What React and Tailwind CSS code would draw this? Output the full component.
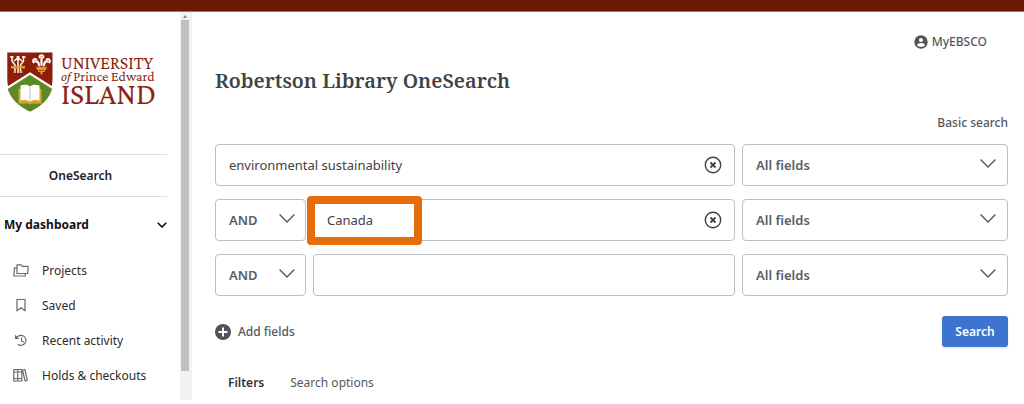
import React from "react";

function Chevron({ className }) {
  return (
    <svg viewBox="0 0 16 9" fill="none" stroke="currentColor" strokeWidth="1.4" className={className} aria-hidden="true">
      <path d="M.6.6 8 8 15.4.6" />
    </svg>
  );
}

function Crest() {
  return (
    <svg viewBox="0 0 46 60" className="h-[60px] w-[46px] shrink-0" role="img" aria-label="University crest">
      <path d="M.3.5h45.2v26c0 17-9 26-22.500 33C9.500 52.500.3 43.500.3 26.500z" fill="#8b1f0a" />
      <path d="M23 22.500 45.500 35.500C43 46 35 54 23 59.500 11 54 3 46 .3 35.500z" fill="#5b8a24" />
      <path d="M0 36 23 21.500 46 36" fill="none" stroke="#fff" strokeWidth="2.200" />
      <g fill="none" stroke="#fff" strokeWidth="1.500">
        <path d="M3 5h3.500M9.500 5h3M15 5h3.500M5 4v5l3 4v8M11 4v17M16.500 4v5l-3 4v8M7 9l4-3 4 3" />
      </g>
      <path d="M4 14h14v2.500H4zM6.500 19h2v2h-2zM13.500 19h2v2h-2z" fill="#e29a35" />
      <g fill="none" stroke="#fff" strokeLinecap="round">
        <path d="M34.500 13V5.500M32 13c-.5-3.500-2-4-4-3.500M37 13c.5-3.500 2-4 4-3.500" strokeWidth="2.200" />
        <path d="M32.500 5.500c0-3 4-3 4 0M26.500 10.500c-1.500-2 .5-4.500 3-3M42.500 10.500c1.500-2-.5-4.500-3-3" strokeWidth="1.800" />
      </g>
      <path d="m29 14 2 1.500 1.500-2 2 2 2-2 1.500 2 2-1.500-1 4H30zM31 18.500h7V20h-7zM33.500 20h2v2.500h-2z" fill="#e29a35" />
      <path d="M11.500 37h23v14.500h-9.500l-2 1-2-1h-9.500z" fill="#d9a62c" />
      <path d="M13.500 33.500c4-1.500 7.500-1 9.500 1 2-2 5.500-2.500 9.500-1v15c-4-1-7.500-.5-9.500 1-2-1.500-5.500-2-9.500-1z" fill="#fff" />
      <path d="M23 34.500v14" fill="none" stroke="#a8b890" strokeWidth=".8" />
    </svg>
  );
}

function Logo() {
  return (
    <a href="#home" className="flex items-start pl-[7px]">
      <Crest />
      <span className="flex flex-col pl-2 pt-1 font-['Crimson_Pro','Liberation_Serif',serif] text-[#8b2412]">
        <span className="text-[18px] leading-[14px]">UNIVERSITY</span>
        <span className="whitespace-nowrap text-[14px] leading-3"><i>of</i> Prince Edward</span>
        <span className="text-[30px] leading-6">ISLAND</span>
      </span>
    </a>
  );
}

const iconProps = {
  viewBox: "0 0 16 16",
  fill: "none",
  stroke: "#666a6e",
  strokeWidth: 1.2,
  strokeLinejoin: "round",
  className: "size-4 shrink-0",
  "aria-hidden": true,
};

const navItems = [
  {
    label: "Projects",
    icon: (
      <svg {...iconProps}>
        <path d="M4 1.800h4l1.300 1.500h5.900l-.5 7.200H4z" />
        <path d="M4 4.800H1.500l-.7 8.200h11.500v-2.500" />
      </svg>
    ),
  },
  {
    label: "Saved",
    icon: (
      <svg {...iconProps}>
        <path d="M4 1.500h8v11.300l-4-3-4 3z" />
      </svg>
    ),
  },
  {
    label: "Recent activity",
    icon: (
      <svg {...iconProps}>
        <path d="M4 4.200a5 5 0 1 1 .8 7M8.500 4.500v3.300l2.300 1.400" />
        <path d="M2 1.800v4.300h4.300z" fill="#666a6e" stroke="none" />
      </svg>
    ),
  },
  {
    label: "Holds & checkouts",
    icon: (
      <svg {...iconProps}>
        <path d="M.8 1.500h4v11.500h-4zM4.800 1.500h4v11.500h-4zM.8 4h8M.8 10.500h8M9.500 2.200l2.300-.7 2.600 10.800-2.300.7z" />
      </svg>
    ),
  },
];

function Sidebar() {
  return (
    <aside className="flex w-[192px] shrink-0">
      <div className="flex-1 pr-[13px] pt-10">
        <Logo />
        <a href="#onesearch" className="mt-[42px] flex h-[43px] items-center justify-center border-y border-[#dedede] pr-[6px] text-[12px] font-semibold text-[#222]">
          OneSearch
        </a>
        <button type="button" aria-expanded="true" className="mt-4 flex h-6 w-full items-center justify-between pl-1 text-[12px] font-bold text-[#111]">
          My dashboard
          <svg viewBox="0 0 10 6" className="h-[6px] w-[10px]" fill="none" stroke="currentColor" strokeWidth="1.600" aria-hidden="true">
            <path d="m.7.7 4.300 4.300L9.300.7" />
          </svg>
        </button>
        <nav aria-label="Dashboard" className="mt-4">
          <ul>
            {navItems.map((item) => (
              <li key={item.label}>
                <a href="#dashboard" className="flex h-[35px] items-center gap-[13px] whitespace-nowrap pl-[13px] text-[12px] text-[#2b2b2b]">
                  {item.icon}
                  {item.label}
                </a>
              </li>
            ))}
          </ul>
        </nav>
      </div>
      <div className="flex w-3 flex-col items-center bg-[#f2f2f2] pr-[3px]" aria-hidden="true">
        <svg viewBox="0 0 4 8" className="h-2 w-1">
          <path d="M2 3 4 6H0z" fill="#888" />
        </svg>
        <div className="h-[351px] w-2 bg-[#c1c1c1]" />
      </div>
    </aside>
  );
}

function SelectBox({ label, options, className, chevronClass }) {
  return (
    <div className={`relative h-[42px] shrink-0 ${className}`}>
      <select aria-label={label} className="size-full appearance-none rounded-[4px] border border-[#bdbfc1] bg-white px-[13px] pt-[2px] text-[13px] font-semibold text-[#5a5d61]">
        {options.map((option) => (
          <option key={option}>{option}</option>
        ))}
      </select>
      <Chevron className={`pointer-events-none absolute top-[15px] h-[9px] w-4 text-[#55585c] ${chevronClass}`} />
    </div>
  );
}

function SearchRow({ value, operator, highlighted, index }) {
  return (
    <div className="flex gap-[7px]">
      {operator && (
        <SelectBox label={`Operator ${index}`} options={["AND", "OR", "NOT"]} className="w-[91px]" chevronClass="right-[11px]" />
      )}
      <div className="relative h-[42px] min-w-0 flex-1">
        <input
          aria-label={`Search term ${index}`}
          defaultValue={value}
          className="size-full rounded-[4px] border border-[#bdbfc1] bg-white px-[13px] text-[13px] text-[#3f4245]"
        />
        {value && (
          <button type="button" aria-label="Clear" className="absolute right-[13px] top-3 size-[18px]">
            <svg viewBox="0 0 18 18" fill="none" stroke="#3f4245" aria-hidden="true">
              <circle cx="9" cy="9" r="7.700" strokeWidth="1.400" />
              <path d="m6.500 6.500 5 5m0-5-5 5" strokeWidth="1.800" />
            </svg>
          </button>
        )}
        {highlighted && (
          <div className="pointer-events-none absolute -left-[6px] -top-[3px] h-[49px] w-[115px] rounded-[4px] border-8 border-[#e66e0a]" />
        )}
      </div>
      <SelectBox label={`Field ${index}`} options={["All fields", "Title", "Author", "Subject"]} className="w-[266px]" chevronClass="right-3" />
    </div>
  );
}

export default function App() {
  return (
    <div className="bg-white font-['Noto_Sans',sans-serif] text-[#55585c]">
      <div className="h-3 border-b border-[#b5705c] bg-[#6b1b02]" />
      <div className="flex">
        <Sidebar />
        <main className="min-w-0 flex-1 pb-[7px] pl-[23px] pr-4 pt-5">
          <div className="flex justify-end pr-[21px]">
            <a href="#account" className="flex h-5 items-center gap-1 text-[12px] font-medium">
              <svg viewBox="0 0 14 14" className="size-[14px]" aria-hidden="true">
                <circle cx="7" cy="7" r="6.700" fill="#505357" />
                <circle cx="7" cy="5" r="2.100" fill="#fff" />
                <path d="M3 10.300c0-3 8-3 8 0-2 2-6 2-8 0z" fill="#fff" />
              </svg>
              MyEBSCO
            </a>
          </div>
          <h1 className="mt-[13px] font-['Noto_Serif','DejaVu_Serif_Condensed','DejaVu_Serif',serif] text-[20px] font-semibold leading-8 text-[#404346]">
            Robertson Library OneSearch
          </h1>
          <div className="mt-4 flex justify-end">
            <a href="#basic" className="text-[12px] font-medium leading-5">Basic search</a>
          </div>
          <form onSubmit={(event) => event.preventDefault()}>
            <div className="mt-[11px] flex flex-col gap-[13px]">
              <SearchRow index={1} value="environmental sustainability" />
              <SearchRow index={2} operator value="Canada" highlighted />
              <SearchRow index={3} operator value="" />
            </div>
            <div className="mt-5 flex items-center justify-between">
              <button type="button" className="flex items-center gap-[7px] text-[12px] font-medium">
                <svg viewBox="0 0 16 16" className="size-4" aria-hidden="true">
                  <circle cx="8" cy="8" r="8" fill="#505357" />
                  <path d="M8 3.500v9M3.500 8h9" stroke="#fff" strokeWidth="2" />
                </svg>
                Add fields
              </button>
              <button type="submit" className="h-[31px] w-[66px] rounded-[3px] bg-[#3d74d0] text-[12px] font-semibold text-white shadow-sm">
                Search
              </button>
            </div>
          </form>
          <div className="mt-[26px] flex gap-[26px] pl-[13px] text-[12px] leading-5">
            <button type="button" className="font-semibold text-[#303336]">Filters</button>
            <button type="button">Search options</button>
          </div>
        </main>
      </div>
    </div>
  );
}
